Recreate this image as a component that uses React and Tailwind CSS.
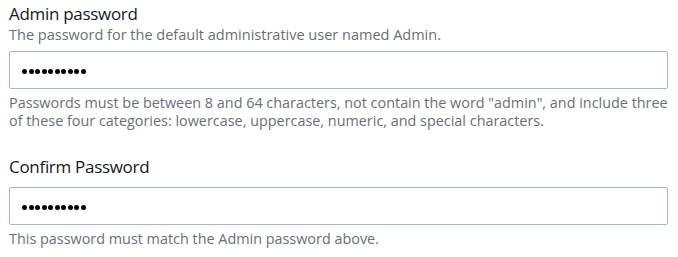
const Dots = () => (
    <div className="flex gap-[1.5px] pt-[2px]">
        {Array.from({ length: 10 }).map((_, i) => (
            <span key={i} className="w-[5px] h-[5px] rounded-full bg-black" />
        ))}
    </div>
);

export default function App() {
    return (
        <div className="w-[678px] h-[257px] bg-white pl-[9px] pt-[3px] font-['Open_Sans',_'Liberation_Sans',_sans-serif]">
            <div className="flex flex-col">
                <label className="text-[17px] leading-[22px] tracking-[-0.3px] text-[#16191f]">Admin password</label>
                <p className="text-[14.5px] leading-[20px] text-[#687078]">The password for the default administrative user named Admin.</p>
                <div className="mt-[6px] w-[659px] h-[38px] border border-[#aab7b8] rounded-[2px] flex items-center pl-[12px]">
                    <Dots />
                </div>
                <p className="mt-[5px] text-[14.4px] leading-[18px] text-[#687078]">
                    Passwords must be between 8 and 64 characters, not contain the word "admin", and include three of these four categories: lowercase, uppercase, numeric, and special characters.
                </p>
            </div>
            <div className="flex flex-col mt-[26px]">
                <label className="text-[17px] leading-[22px] tracking-[-0.3px] text-[#16191f]">Confirm Password</label>
                <div className="mt-[9px] w-[659px] h-[38px] border border-[#aab7b8] rounded-[2px] flex items-center pl-[12px]">
                    <Dots />
                </div>
                <p className="mt-[5px] text-[14.4px] leading-[18px] text-[#687078]">This password must match the Admin password above.</p>
            </div>
        </div>
    );
}
